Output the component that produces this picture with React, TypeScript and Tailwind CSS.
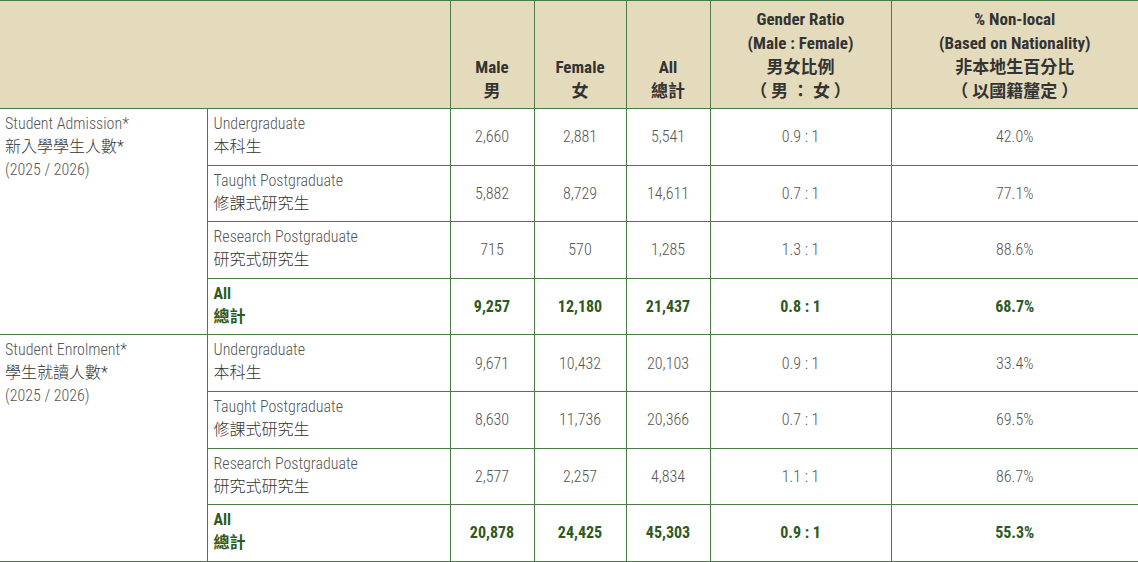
const font = { fontFamily: '"Roboto", "Noto Sans CJK TC", sans-serif' };

type Row = {
  en: string;
  zh: string;
  male: string;
  female: string;
  all: string;
  ratio: string;
  nonLocal: string;
  total?: boolean;
};

const groups: { en: string; zh: string; year: string; rows: Row[] }[] = [
  {
    en: "Student Admission*",
    zh: "新入學學生人數*",
    year: "(2025 / 2026)",
    rows: [
      { en: "Undergraduate", zh: "本科生", male: "2,660", female: "2,881", all: "5,541", ratio: "0.9 : 1", nonLocal: "42.0%" },
      { en: "Taught Postgraduate", zh: "修課式研究生", male: "5,882", female: "8,729", all: "14,611", ratio: "0.7 : 1", nonLocal: "77.1%" },
      { en: "Research Postgraduate", zh: "研究式研究生", male: "715", female: "570", all: "1,285", ratio: "1.3 : 1", nonLocal: "88.6%" },
      { en: "All", zh: "總計", male: "9,257", female: "12,180", all: "21,437", ratio: "0.8 : 1", nonLocal: "68.7%", total: true },
    ],
  },
  {
    en: "Student Enrolment*",
    zh: "學生就讀人數*",
    year: "(2025 / 2026)",
    rows: [
      { en: "Undergraduate", zh: "本科生", male: "9,671", female: "10,432", all: "20,103", ratio: "0.9 : 1", nonLocal: "33.4%" },
      { en: "Taught Postgraduate", zh: "修課式研究生", male: "8,630", female: "11,736", all: "20,366", ratio: "0.7 : 1", nonLocal: "69.5%" },
      { en: "Research Postgraduate", zh: "研究式研究生", male: "2,577", female: "2,257", all: "4,834", ratio: "1.1 : 1", nonLocal: "86.7%" },
      { en: "All", zh: "總計", male: "20,878", female: "24,425", all: "45,303", ratio: "0.9 : 1", nonLocal: "55.3%", total: true },
    ],
  },
];

const cell = "border border-[#4b7b47] px-[5px]";
const num = "text-center align-middle";
const head = `${cell} text-center align-bottom pb-[5px]`;

export default function App() {
  return (
    <div className="w-[1138px] h-[562px] overflow-hidden bg-white" style={font}>
      <table className="w-[1138px] border-collapse table-fixed text-[16px] leading-[23px] font-stretch-condensed">
        <colgroup>
          <col className="w-[207px]" />
          <col className="w-[243px]" />
          <col className="w-[84px]" />
          <col className="w-[92px]" />
          <col className="w-[84px]" />
          <col className="w-[181px]" />
          <col className="w-[247px]" />
        </colgroup>
        <thead>
          <tr className="h-[108px] bg-[#e4dbbd] text-[#333333] font-bold text-[17px] leading-[24px]">
            <th colSpan={2} className={`${cell} border-l-0`} />
            <th className={head}>Male<br />男</th>
            <th className={head}>Female<br />女</th>
            <th className={head}>All<br />總計</th>
            <th className={head}>
              Gender Ratio<br />(Male : Female)<br />男女比例<br />（ 男 ： 女 ）
            </th>
            <th className={`${head} border-r-0`}>
              % Non-local<br />(Based on Nationality)<br />非本地生百分比<br />（ 以國籍釐定 ）
            </th>
          </tr>
        </thead>
        <tbody>
          {groups.map((g) =>
            g.rows.map((r, i) => {
              const tone = r.total ? "font-bold text-[#2d5a1e]" : "font-light text-[#555555]";
              return (
                <tr key={g.en + r.en + i} className="h-[56.6px]">
                  {i === 0 && (
                    <td rowSpan={4} className={`${cell} border-l-0 align-top pt-[3px] font-light text-[#555555]`}>
                      {g.en}
                      <br />
                      <span className="text-[#333333]">{g.zh}</span>
                      <br />
                      {g.year}
                    </td>
                  )}
                  <td className={`${cell} align-top pt-[3px] px-[6px] ${tone}`}>
                    {r.en}
                    <br />
                    <span className={r.total ? "" : "text-[#333333]"}>{r.zh}</span>
                  </td>
                  <td className={`${cell} ${num} ${tone}`}>{r.male}</td>
                  <td className={`${cell} ${num} ${tone}`}>{r.female}</td>
                  <td className={`${cell} ${num} ${tone}`}>{r.all}</td>
                  <td className={`${cell} ${num} ${tone}`}>{r.ratio}</td>
                  <td className={`${cell} border-r-0 ${num} ${tone}`}>{r.nonLocal}</td>
                </tr>
              );
            })
          )}
        </tbody>
      </table>
    </div>
  );
}
